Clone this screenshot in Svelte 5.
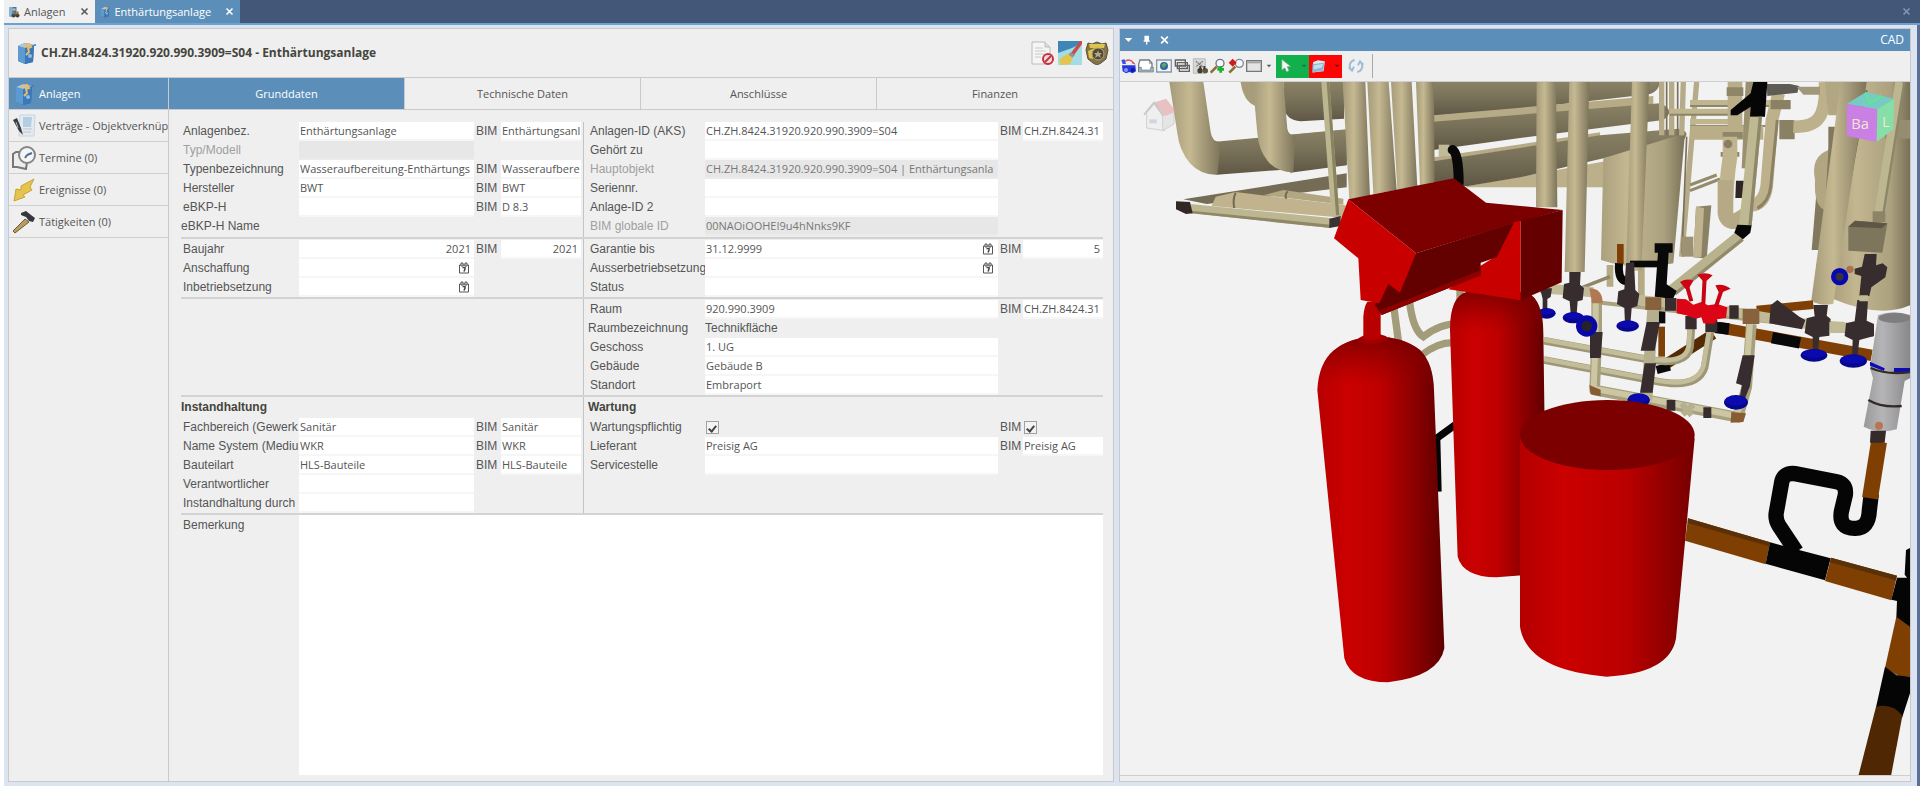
<script>
	const navItems = [
		{ icon: 'device', text: 'Anlagen', active: true },
		{ icon: 'contract', text: 'Verträge - Objektverknüp' },
		{ icon: 'clock', text: 'Termine', count: 0 },
		{ icon: 'bolt', text: 'Ereignisse', count: 0 },
		{ icon: 'hammer', text: 'Tätigkeiten', count: 0 }
	];

	const tabs = ['Grunddaten', 'Technische Daten', 'Anschlüsse', 'Finanzen'];
	let activeTab = $state('Grunddaten');

	const sections = [
		{
			left: [
				{ label: 'Anlagenbez.', value: 'Enthärtungsanlage', bim: 'Enthärtungsanl' },
				{ label: 'Typ/Modell', value: '', disabled: true },
				{
					label: 'Typenbezeichnung',
					value: 'Wasseraufbereitung-Enthärtungs',
					bim: 'Wasseraufbere'
				},
				{ label: 'Hersteller', value: 'BWT', bim: 'BWT' },
				{ label: 'eBKP-H', value: '', bim: 'D 8.3' },
				{ label: 'eBKP-H Name', plain: '' }
			],
			right: [
				{
					label: 'Anlagen-ID (AKS)',
					value: 'CH.ZH.8424.31920.920.990.3909=S04',
					bim: 'CH.ZH.8424.31'
				},
				{ label: 'Gehört zu', value: '' },
				{
					label: 'Hauptobjekt',
					value: 'CH.ZH.8424.31920.920.990.3909=S04 | Enthärtungsanla',
					disabled: true
				},
				{ label: 'Seriennr.', value: '' },
				{ label: 'Anlage-ID 2', value: '' },
				{ label: 'BIM globale ID', value: '00NAOiOOHEI9u4hNnks9KF', disabled: true }
			]
		},
		{
			left: [
				{ label: 'Baujahr', value: '2021', bim: '2021', number: true, bimNumber: true },
				{ label: 'Anschaffung', value: '', date: true },
				{ label: 'Inbetriebsetzung', value: '', date: true }
			],
			right: [
				{ label: 'Garantie bis', value: '31.12.9999', bim: '5', date: true, bimNumber: true },
				{ label: 'Ausserbetriebsetzung', value: '', date: true },
				{ label: 'Status', value: '' }
			]
		},
		{
			left: [],
			right: [
				{ label: 'Raum', value: '920.990.3909', bim: 'CH.ZH.8424.31' },
				{ label: 'Raumbezeichnung', plain: 'Technikfläche' },
				{ label: 'Geschoss', value: '1. UG' },
				{ label: 'Gebäude', value: 'Gebäude B' },
				{ label: 'Standort', value: 'Embraport' }
			]
		},
		{
			leftTitle: 'Instandhaltung',
			rightTitle: 'Wartung',
			left: [
				{ label: 'Fachbereich (Gewerk', value: 'Sanitär', bim: 'Sanitär' },
				{ label: 'Name System (Mediu', value: 'WKR', bim: 'WKR' },
				{ label: 'Bauteilart', value: 'HLS-Bauteile', bim: 'HLS-Bauteile' },
				{ label: 'Verantwortlicher', value: '' },
				{ label: 'Instandhaltung durch', value: '' }
			],
			right: [
				{ label: 'Wartungspflichtig', checked: true },
				{ label: 'Lieferant', value: 'Preisig AG', bim: 'Preisig AG' },
				{ label: 'Servicestelle', value: '' }
			]
		}
	];

	const tools = ['find', 'print', 'globe', 'layers', 'sheet', 'zoomin', 'zoomoff', 'window'];

	// wheel handles seen from the side: [cx, cy, rx, ry]
	const wheels = [
		[140, 730, 27, 16],
		[220, 743, 32, 17],
		[383, 768, 34, 17],
		[416, 990, 34, 20],
		[708, 997, 36, 22],
		[942, 856, 40, 19],
		[1060, 873, 41, 20]
	];
</script>

{#snippet icon(name)}
	<svg class="icon" viewBox="0 0 24 24" aria-hidden="true">
		{#if name === 'device'}
			<path d="M4 5 11 2l9 2-1 17-8 2-7-3z" fill="#2c66a4" />
			<path d="M4 5 11 7v16l-7-3z" fill="#5c9ad2" />
			<path d="M11 7l9-3-1 17-8 2z" fill="#3979ba" />
			<path d="M4 5 11 2l9 2-9 3z" fill="#a9cbe8" />
			<path d="M9 5l6-2 2 3-3 1 1 4-3 3" fill="none" stroke="#e9bd65" stroke-width="2" />
			<circle cx="16" cy="15" r="2" fill="#93bde0" />
			<circle cx="21" cy="4" r="1" fill="#3979ba" />
		{:else if name === 'search-device'}
			<path d="M3 2h14v19H3z" fill="#3979ba" />
			<path d="M3 2h6v19H3z" fill="#80b2dd" />
			<path d="M9 5h6v4H9z" fill="#e9bd65" />
			<circle cx="11" cy="19" r="4" fill="#4c4029" /><circle cx="19" cy="19" r="4" fill="#4c4029" />
			<path d="M10 11h4v6h-4zM17 11h4v6h-4z" fill="#8a723d" />
		{:else if name === 'contract'}
			<path d="M8 1h15l-1 21H7z" fill="#e3eaf1" stroke="#ccd4db" />
			<path d="M11 3h9l-1 10h-8z" fill="#b3cde1" />
			<path d="M11 15h9M11 18h8" stroke="#bcc3ca" />
			<path d="m1 6 4-2 4 10 2 7-4-4z" fill="#393d42" />
			<path d="m4 8 2 6" stroke="#aeb4ba" />
		{:else if name === 'clock'}
			<path d="M8 6H4L1 8v13h4l9 2 1-7" fill="#ededed" stroke="#777" stroke-width="2" />
			<circle cx="15" cy="9" r="8" fill="#f4f6f7" stroke="#858585" stroke-width="2" />
			<path d="M15 9l5-2M15 9l-2 3" stroke="#4f6f8e" stroke-width="2" />
		{:else if name === 'bolt'}
			<path d="M22 1 9 8v4L4 11 2 23l11-4-2-2 9-5-2-3z" fill="#e6c34c" stroke="#c7a33a" />
		{:else if name === 'hammer'}
			<path d="M13 9 1 21l2 2L17 12z" fill="#b99d63" stroke="#6e5a34" />
			<path d="M9 3l5-2 5 4 4 3-2 4-4-1-3-4-5-2z" fill="#34373b" />
		{:else if name === 'document'}
			<path d="M1 1h13l5 5v17H1z" fill="#f5f5f5" stroke="#bbb" />
			<path d="M14 1v5h5" fill="#ddd" stroke="#bbb" />
			<path d="M4 7h8M4 10h11M4 13h9M4 16h6" stroke="#c9c9c9" />
			<circle cx="17" cy="18" r="5" fill="#f4dddd" stroke="#c6323d" stroke-width="2" />
			<path d="m14 21 6-6" stroke="#c6323d" stroke-width="2" />
		{:else if name === 'brush'}
			<path d="M0 0h24v24H0z" fill="#3f86b8" />
			<path d="M0 12 14 7l10-5v22H0z" fill="#a3dce2" />
			<path d="M22 0h2v3l-8 11-3-2z" fill="#c84b4b" />
			<path d="m13 11 4 3-3 3-4-3z" fill="#8d9296" />
			<path d="m10 13 5 4-3 6-9 1-2-5 5-4z" fill="#e4c44e" />
		{:else if name === 'badge'}
			<path d="m3 2 4 1 5-2 5 2 4-1 2 7-2 9-5 4-4 2-4-2-5-4-2-9z" fill="#81734a" stroke="#5d5131" />
			<path d="M4 3h16l-1 4H5zM3 10l7-3 3 2-6 4 1 5-4-1z" fill="#dfc351" />
			<circle cx="13" cy="13" r="6" fill="#514934" stroke="#b5a779" />
			<path d="m13 9 1 3h3l-2 2 1 3-3-2-3 2 1-3-2-2h3z" fill="#b4a98b" />
		{:else if name === 'find'}
			<path d="M2 3l5-1 2 7H4z" fill="#3b50e6" />
			<path d="M8 5q7-5 13 3l-3-1" fill="none" stroke="#d85656" stroke-width="2" />
			<path d="M3 11h20l1 9-5 3-5-2-5 2-5-3z" fill="#2637dc" />
			<circle cx="9" cy="18" r="3" fill="#8794ff" /><circle cx="19" cy="18" r="3" fill="#1017a1" />
		{:else if name === 'print'}
			<path d="M3 3h14l4 5v12H1V9z" fill="#fff" stroke="#767c82" stroke-width="2" />
			<path d="M1 14h4v4h14v-4h4v7H1z" fill="#9fb4c6" stroke="#6c7278" />
			<path d="M17 3v5h4" fill="none" stroke="#767c82" />
		{:else if name === 'globe'}
			<path d="M1 3h22v18H1z" fill="#f1f4f7" stroke="#8a98a6" stroke-width="2" />
			<circle cx="12" cy="12" r="6" fill="#2b68a6" /><path d="M8 10l5-3 3 3-5 5z" fill="#69a45a" />
		{:else if name === 'layers'}
			<path d="M2 3h15v9H2zM5 7h15v9H5zM8 11h15v9H8z" fill="#eee" stroke="#626262" stroke-width="2" />
			<path d="M11 15h9" stroke="#626262" />
		{:else if name === 'sheet'}
			<path d="M2 1h18v22H2z" fill="#d7d7d7" stroke="#aaa" />
			<path d="m6 5 10 8M16 5 6 13" stroke="#777" stroke-width="2" stroke-dasharray="2 1" />
			<circle cx="12" cy="19" r="4" fill="#433d2e" /><circle cx="20" cy="19" r="4" fill="#5f563c" />
			<path d="M11 12h3v5h-3zM17 12h3v5h-3z" fill="#433d2e" />
		{:else if name === 'zoomin'}
			<circle cx="15" cy="8" r="6" fill="#f2f8fb" stroke="#777" stroke-width="2" />
			<path d="m10 13-9 9" stroke="#8b6f38" stroke-width="4" />
			<path d="M16 12v10M11 17h10" stroke="#19b335" stroke-width="4" />
		{:else if name === 'zoomoff'}
			<circle cx="17" cy="8" r="6" fill="#f2f8fb" stroke="#888" stroke-width="2" />
			<path d="m11 13-9 9" stroke="#8b6f38" stroke-width="4" />
			<path d="m7 1 6 6-6 6-6-6z" fill="#d41b1b" />
		{:else if name === 'window'}
			<path d="M1 4h22v16H1z" fill="#e4e4e4" stroke="#777" stroke-width="2" />
			<path d="M2 5h20v3H2z" fill="#a4a4a4" />
		{:else if name === 'cursor'}
			<path d="M5 1v18l5-4 3 7 4-2-3-7h6z" fill="#f4f4f4" stroke="#8ba899" />
		{:else if name === 'folder'}
			<path d="M2 5 10 2l12 2-2 17-19 2z" fill="#dceaf0" />
			<path d="M1 9 22 6l-3 14-18 3z" fill="#8cb9d2" />
			<path d="M3 11 19 8l-2 6-14 4z" fill="#c5dfec" />
		{:else if name === 'refresh'}
			<path d="M10 3a9 9 0 0 0-5 15M1 14l5 5 3-6M14 21a9 9 0 0 0 5-15M23 10l-5-5-3 6" fill="none" stroke="#9dbdd6" stroke-width="3" />
		{:else if name === 'pin'}
			<path d="M7 2h11v11h2v3H5v-3h2zM11 16h3v7h-3z" fill="#fff" />
		{:else if name === 'caret'}
			<path d="M3 7h18l-9 10z" fill="currentColor" />
		{:else if name === 'close'}
			<path d="m4 4 16 16M20 4 4 20" stroke="currentColor" stroke-width="4" />
		{:else if name === 'calendar'}
			<path d="M3 6h18v16H3z" fill="none" stroke="#555" stroke-width="2" />
			<path d="M6 2h4v6H6zM14 2h4v6h-4z" fill="#f8f8f8" stroke="#555" stroke-width="2" />
			<path d="M9 11h5v3l-2 5" fill="none" stroke="#444" stroke-width="3" />
		{/if}
	</svg>
{/snippet}

{#snippet row(item, id)}
	<div class="row" class:plain={item.plain !== undefined} class:off={item.disabled}>
		<label for={id}>{item.label}</label>
		{#if item.plain !== undefined}
			<output {id}>{item.plain}</output>
		{:else if item.checked !== undefined}
			<input class="check" type="checkbox" {id} checked={item.checked} />
			<label for="{id}-bim">BIM</label>
			<input class="check" type="checkbox" id="{id}-bim" checked={item.checked} />
		{:else}
			<div class="field">
				<input type="text" {id} class:number={item.number} value={item.value} disabled={item.disabled} />
				{#if item.date}
					<button class="pick" aria-label="Datum wählen">{@render icon('calendar')}</button>
				{/if}
			</div>
			{#if item.bim}
				<label for="{id}-bim">BIM</label>
				<div class="field">
					<input type="text" id="{id}-bim" class:number={item.bimNumber} value={item.bim} />
				</div>
			{/if}
		{/if}
	</div>
{/snippet}

<div class="app">
	<div class="windows">
		<div class="window-tab light">
			{@render icon('search-device')}
			<span>Anlagen</span>
			<button aria-label="Anlagen schliessen">{@render icon('close')}</button>
		</div>
		<div class="window-tab">
			{@render icon('device')}
			<span>Enthärtungsanlage</span>
			<button aria-label="Enthärtungsanlage schliessen">{@render icon('close')}</button>
		</div>
		<button class="close-all" aria-label="Schliessen">{@render icon('close')}</button>
	</div>

	<main>
		<section class="panel record">
			<header>
				{@render icon('device')}
				<h1>CH.ZH.8424.31920.920.990.3909=S04 - Enthärtungsanlage</h1>
				<button aria-label="Dokument">{@render icon('document')}</button>
				<button aria-label="Darstellung">{@render icon('brush')}</button>
				<button aria-label="Berechtigung">{@render icon('badge')}</button>
			</header>

			<div class="body">
				<nav>
					{#each navItems as item}
						<button class:active={item.active}>
							{@render icon(item.icon)}
							<span>{item.text}{item.count !== undefined ? ` (${item.count})` : ''}</span>
						</button>
					{/each}
				</nav>

				<div class="content">
					<div class="tabs" role="tablist">
						{#each tabs as tab}
							<button
								role="tab"
								aria-selected={tab === activeTab}
								class:active={tab === activeTab}
								onclick={() => (activeTab = tab)}>{tab}</button
							>
						{/each}
					</div>

					<form onsubmit={(e) => e.preventDefault()}>
						{#each sections as section, s}
							<div class="section">
								<div class="half left">
									{#if section.leftTitle}<h2>{section.leftTitle}</h2>{/if}
									{#each section.left as item, i}
										{@render row(item, `l${s}-${i}`)}
									{/each}
								</div>
								<div class="half right">
									{#if section.rightTitle}<h2>{section.rightTitle}</h2>{/if}
									{#each section.right as item, i}
										{@render row(item, `r${s}-${i}`)}
									{/each}
								</div>
							</div>
						{/each}
						<div class="remark">
							<label for="remark">Bemerkung</label>
							<textarea id="remark"></textarea>
						</div>
					</form>
				</div>
			</div>
		</section>

		<section class="panel cad">
			<div class="cad-title">
				<button aria-label="Menü">{@render icon('caret')}</button>
				<button aria-label="Anheften">{@render icon('pin')}</button>
				<button aria-label="CAD schliessen">{@render icon('close')}</button>
				<span>CAD</span>
			</div>
			<div class="toolbar">
				{#each tools as tool}
					<button aria-label={tool}>{@render icon(tool)}</button>
				{/each}
				<button class="drop" aria-label="Fenster wählen">{@render icon('caret')}</button>
				<button class="split green" aria-label="Auswahl">
					{@render icon('cursor')}<i>{@render icon('caret')}</i>
				</button>
				<button class="split red" aria-label="Ordner">
					{@render icon('folder')}<i>{@render icon('caret')}</i>
				</button>
				<button class="refresh" aria-label="Aktualisieren">{@render icon('refresh')}</button>
				<span class="divider"></span>
			</div>

			<svg class="scene" viewBox="0 36 2370 2082" preserveAspectRatio="xMinYMin slice" role="img" aria-label="3D-Modell">
				<defs>
					<linearGradient id="tan">
						<stop offset="0" stop-color="#a59b79" />
						<stop offset=".4" stop-color="#c5b992" />
						<stop offset="1" stop-color="#7d745a" />
					</linearGradient>
					<linearGradient id="tanTank">
						<stop offset="0" stop-color="#aaa07c" />
						<stop offset=".3" stop-color="#c3b791" />
						<stop offset=".75" stop-color="#aba17e" />
						<stop offset="1" stop-color="#787057" />
					</linearGradient>
					<linearGradient id="duct" x2="0" y2="1">
						<stop offset="0" stop-color="#8b8265" />
						<stop offset=".5" stop-color="#777058" />
						<stop offset="1" stop-color="#5f5744" />
					</linearGradient>
					<linearGradient id="red">
						<stop offset="0" stop-color="#b80000" />
						<stop offset=".25" stop-color="#cb0000" />
						<stop offset=".5" stop-color="#bd0000" />
						<stop offset=".8" stop-color="#850000" />
						<stop offset="1" stop-color="#5e0000" />
					</linearGradient>
					<linearGradient id="barrel">
						<stop offset="0" stop-color="#b40000" />
						<stop offset=".25" stop-color="#cb0000" />
						<stop offset=".6" stop-color="#bb0000" />
						<stop offset="1" stop-color="#740000" />
					</linearGradient>
					<linearGradient id="dome" x2="0" y2="1">
						<stop offset="0" stop-color="#700000" stop-opacity=".8" />
						<stop offset=".14" stop-color="#900000" stop-opacity="0" />
					</linearGradient>
					<linearGradient id="grey">
						<stop offset="0" stop-color="#999" />
						<stop offset=".4" stop-color="#b5b5b7" />
						<stop offset="1" stop-color="#88888a" />
					</linearGradient>
				</defs>
				<path d="M0 36h2370v2082H0z" fill="#f2f2f2" />

				<!-- ducts -->
				<path d="M940 36h680q-5 40-60 40L1200 117 940 137z" fill="url(#duct)" />
				<path d="m940 136 660-58v28L940 158z" fill="#b6ab86" />
				<path d="m940 155 680-55q50 20 10 50L1200 204 940 240z" fill="url(#duct)" />
				<path d="m940 262 500-75v12L940 275z" fill="#b6ab86" />
				<path d="m1040 348 160-28 330-60v92h-490z" fill="#bbb08a" />
				<path d="m940 274 500-78 235-20q40 8 15 34l-490 112-160 27-100-10z" fill="url(#duct)" />
				<path d="M490 36h182v110l-130 8q-45-4-49-40z" fill="url(#duct)" />
				<path d="M362 36h40l4 72q-36-14-44-72z" fill="#a79d7a" />
				<path d="m270 217 410-38v106l-390 29z" fill="url(#duct)" />
				<path d="m500 195 180-17v108l-170 22z" fill="url(#duct)" />
				<path d="M148 36h102l22 150q4 30 30 31l-10 97q-50 2-82-34-32-38-38-90z" fill="url(#tan)" />
				<path d="M398 36h92l12 140q4 20 24 22l-6 109q-50 0-77-34-27-32-31-83z" fill="url(#tan)" />

				<!-- rack -->
				<path d="m190 388 490-78v42L260 402z" fill="#746c55" />
				<path d="m275 408 12-28 60-14 330 40v38z" fill="#c0b38e" />
				<path d="m430 376 60-16 180 26v18z" fill="#b3a782" />
				<path d="M347 368q-10 20-4 46M503 364q-10 10-4 22" fill="none" stroke="#716951" stroke-width="6" />
				<path d="m212 402 420 42v30L212 429z" fill="#bdb791" />
				<path d="m212 422 420 42v10L212 430z" fill="#8e8869" />
				<path d="m168 394 42 2 8 34-20 2-30-14z" fill="#332725" />
				<path d="m628 446 34-8v30l-34 6z" fill="#373433" />
				<path d="m604 36h24l30 400h-24z" fill="#bcb690" />
				<path d="m620 36 8 0 30 400h-10z" fill="#89835f" />
				<path d="m668 36h68l14 344-62 8z" fill="url(#tan)" />
				<path d="m742 36h64l24 324-70 12z" fill="url(#tan)" />
				<path d="m813 36h62l17 314-60 8z" fill="url(#tan)" />
				<path d="m888 36h54l2 300-44 12z" fill="url(#tan)" />
				<path d="M956 224h32v34h-32z" fill="#c0ba96" />
				<path d="M998 240q18 10 18 100" fill="none" stroke="#080808" stroke-width="30" stroke-linecap="round" />

				<g transform="translate(1140 0)">
					<!-- rear plant -->
					<path d="M310 265 555 190l-35 390q-110 26-217-10z" fill="url(#tanTank)" />
					<path d="M330 585v65M424 590v90" stroke="#b4aa85" stroke-width="20" />
					<path d="m240 655 90-35" stroke="#8f8768" stroke-width="10" />
					<path d="M485 36v160M515 36v160M550 36l-5 160M590 36 545 560" fill="none" stroke="#b5ab88" stroke-width="16" />
					<path d="M500 36v160M533 36v160M560 200l-14 350" fill="none" stroke="#787058" stroke-width="5" />
					<path d="M510 124h200M570 98h250M570 155h150" stroke="#bfb58f" stroke-width="16" />
					<path d="M510 134h200M570 108h250M570 168h250" stroke="#8d8567" stroke-width="6" />
					<path d="M570 188h220" stroke="#b9ae88" stroke-width="42" />
					<path d="m570 345 80-30M570 362l90-35" stroke="#948b6c" stroke-width="9" />
					<path d="m588 410 46-4-14 160-40-4z" fill="#8b8266" />
					<path d="m588 410 24 4-8 148-24 0z" fill="#bfb48f" />
					<path d="M545 500h35v60h-35z" fill="#9d9373" />
					<path d="M705 36v160" stroke="#b9ae88" stroke-width="44" />
					<path d="M680 52h50v26h-50zM668 186h60v20h-60zM662 246h56v14h-56z" fill="#8f8668" />
					<path d="M690 200v60q-14 90-12 180" fill="none" stroke="#c0b48f" stroke-width="44" />
					<circle cx="684" cy="222" r="13" fill="#887f63" />
					<path d="M676 330v100q4 26 30 24l40-24" fill="none" stroke="#b5aa85" stroke-width="46" />
					<path d="M708 332h36l-6 52h-32z" fill="#2f2523" />
					<path d="m760 36-12 260" stroke="#9a9070" stroke-width="46" />
					<path d="M836 70 816 150 800 350q-8 52-46 56" fill="none" stroke="#bcb18b" stroke-width="38" />
					<path d="m832 150-20 200q-5 45-40 65" fill="none" stroke="#8b8265" stroke-width="9" />
					<path d="M800 42h70l28 6-6 20-90 10z" fill="#5e5b54" />
					<path d="M812 90h60v28h-60zM838 150h46v58h-46z" fill="#8a8164" />
					<path d="M975 36q4 80-20 110-20 26-75 24" fill="none" stroke="#bcb18b" stroke-width="38" />
					<path d="M890 50h70v24h-50z" fill="#a1977a" />
					<path d="M760 36h42l-7 104h-45l2-30-40 26h-20v-16l60-50z" fill="#060606" />
					<path d="M750 140h36l-31 326h-38z" fill="#bfb993" />
					<path d="m776 140 10 0-31 326h-10z" fill="#8e8869" />
					<path d="M720 498 515 662" stroke="#b9b38d" stroke-width="34" />
					<path d="M728 508 525 672" stroke="#918b6c" stroke-width="10" />
					<path d="m712 464 43 2-4 22-22 20-26-20z" fill="#080808" />

					<!-- right tank -->
					<path d="M955 300q30-20 30-70l0-60h60v370h-110z" fill="#81785e" />
					<path d="M985 240q-54 20-40 90-4 80 30 90z" fill="#b1a681" />
					<path d="M975 36h110l-20 100H985z" fill="#b2a783" />
					<path d="M1075 36h155v670q-90 40-232-20z" fill="url(#tanTank)" />
					<path d="M1155 150h75v56h-75z" fill="#968c6f" />
					<path d="M1100 60 1020 500" stroke="#756d55" stroke-width="6" />
					<path d="M1022 36h78l-100 665q-40 10-66-10z" fill="url(#tan)" />
					<path d="m1200 36-63 395" stroke="#bdb790" stroke-width="28" />
					<path d="m1213 36-63 395" stroke="#8c866a" stroke-width="7" />
					<path d="M1118 424h38v32h-38z" fill="#8d8468" />
					<path d="m1045 470 20-18 97 8-15 88-102-6z" fill="#7d755c" />
					<path d="m1045 470 100 5 17-15-97-8z" fill="#5e5745" />

					<path d="M110 36h58l4 376h-64z" fill="url(#tan)" />
					<path d="M208 36h60l-14 570h-60z" fill="url(#tan)" />
					<path d="M396 36h52l-24 566h-46z" fill="url(#tan)" />

					<!-- waste pipes -->
					<path d="M361 522v60" stroke="#7f3f04" stroke-width="20" />
					<path d="M357 580q-4 50 22 54" fill="none" stroke="#080808" stroke-width="24" />
					<path d="M390 582h90" stroke="#090909" stroke-width="20" />
					<path d="M464 520h54v28h-12l-6 95 30 20-10 22h-56l10-137h-10z" fill="#090909" />
					<path d="m770 720 170-16" stroke="#804005" stroke-width="26" />
					<path d="m640 792-150 95" stroke="#552b04" stroke-width="32" />
					<path d="M486 700v60" stroke="#0b0a0a" stroke-width="20" />
					<path d="M485 770v90" stroke="#7d4008" stroke-width="20" />
					<path d="m655 772 460 84" stroke="#804005" stroke-width="34" />
					<path d="m645 772 42 5M816 803l84 16" stroke="#080808" stroke-width="34" />
					<path d="m470 900 40-10" stroke="#0b0a0a" stroke-width="24" />

					<!-- copper and plastic lines -->
					<path d="m290 697 610 68 220 30" fill="none" stroke="#a9a37f" stroke-width="12" />
					<path d="m120 655 160 12M400 688l140 16M680 722l220 38 220 20" fill="none" stroke="#c0ba97" stroke-width="30" />
					<path d="M132 812 440 868q120 22 130-36l5-70M132 870l330 62q130 28 152-40l18-110" fill="none" stroke="#9d9777" stroke-width="23" />
					<path d="M132 809 440 865q116 22 126-36l5-70M132 867l330 62q126 28 148-40l18-110" fill="none" stroke="#c3bd99" stroke-width="14" />
					<path d="M290 690v110l-6 160 210 40 220 42 26-90 14-190" fill="none" stroke="#a6a07e" stroke-width="32" stroke-linejoin="round" />
					<path d="M287 690v110l-6 156 213 40 216 42 26-90 14-190" fill="none" stroke="#ccc6a3" stroke-width="18" stroke-linejoin="round" />
					<path d="m460 700-20 290" stroke="#b5af8d" stroke-width="34" />
					<path d="M268 655q40 0 40 45h-32z" fill="#b17854" />
					<path d="M436 682h48v38h-48zM728 716h50v46h-50z" fill="#88623c" />
					<path d="m268 945 34 14v20l-30-6zM694 1026l44 4-8 26-38 2z" fill="#875c33" />

					<!-- fittings -->
					<g fill="#382d2e">
						<path d="M208 606h34l-2 38 12 10-4 36-15 4-4 50h-16l-4-50-21-10 4-42 16-4zM120 655h36l-4 26-10 6v40h-14v-40z" />
						<path d="M378 580l24-4 4 84 12 12-6 36-17 6-4 50h-16l-2-50-22-12 4-38 18-6zM270 786h38l-6 78h-32zM440 756h40l-16 86h-42zM434 880h34l-10 88h-38zM728 856h36l-14 92-16 40h-16l8-42-18-6zM556 738h34v40h-34zM616 750h36v36h-36zM495 684h34v38h-34zM688 706h28v40h-28z" />
						<path d="m812 706 20-16 66 50 18 10-10 28-98-18zM940 705h44l-4 32 12 10-4 50-30 4-4 50h-16v-50l-24-12 6-44 24-6zM1072 690h32l-4 62 22 10v36l-44 12-6 50h-16l2-50-24-12 4-38 26-6zM1094 552h36l-2 34 20-6 14 12-6 30-42 30-6 26h-30l6-60-20-6v-16l22-6zM500 990h26v32h-26zM610 1012h24v32h-24z" />
					</g>
					<path d="M1078 676h26v18h-26zM988 755h44v34h-44z" fill="#c0ba97" />
					<path d="m545 1000 30 36M580 1004l-32 30" stroke="#b6b08e" stroke-width="18" />

					{#each wheels as [cx, cy, rx, ry]}
						<ellipse {cx} {cy} {rx} {ry} fill="#07078d" />
						<ellipse {cx} cy={cy - 5} rx={rx - 4} ry={ry - 7} fill="#0a0ab0" />
					{/each}
					<circle cx="260" cy="768" r="24" fill="#26222c" stroke="#0808a8" stroke-width="16" />
					<circle cx="1019" cy="620" r="19" fill="#35313b" stroke="#0808b2" stroke-width="14" />
					<circle cx="1050" cy="598" r="11" fill="#a87350" />

					<!-- highlighted valve group -->
					<path d="m530 686 28 2 22 16 24-8 20 10 28-4 30 10-4 32-26 4-10 14-32-2-6-18-16 4-30-10-28-6z" fill="#dc0516" />
					<path d="m560 644 14 50M614 622l-4 80M666 656l-18 54" stroke="#c60413" stroke-width="12" />
					<path d="M540 636q20-12 40-4l-14 24h-10zM592 614q24-10 46 2l-18 16h-12zM646 646q24-6 46 10l-24 10h-12z" fill="#cc0414" />

					<!-- filter housing -->
					<path d="M1134 735q46-16 96 0v190l-16 8-24 145q-50 16-99-8l28-145-9-30z" fill="url(#grey)" />
					<ellipse cx="1184" cy="744" rx="48" ry="15" fill="#7e7e80" />
					<path d="m1110 875 44 20-2 8-42-16zM1182 894h48v14h-48z" fill="#0b0bb8" />
					<path d="M1112 894q50 22 118 12M1105 990q40 24 100 18" fill="none" stroke="#332a28" stroke-width="7" />
					<circle cx="1137" cy="1067" r="12" fill="#b97552" />
				</g>

				<!-- drain -->
				<path d="m1704 1345 246 72-13 66-242-71z" fill="#7f3f02" />
				<path d="m1704 1345 246 72-3 12-244-70z" fill="#593008" />
				<path d="m1950 1417 182 48-17 66-178-50z" fill="#050505" />
				<path d="m2133 1463 198 54-17 74-199-58z" fill="#7f3f02" />
				<path d="m2133 1463 198 54-4 14-197-54z" fill="#593008" />
				<path d="M2331 1523h39v150l-41-30 2-50-17-4zM2358 1440l12-6v100l-16-20z" fill="#050505" />
				<path d="m2329 1640 41 30v150h-30l-45-26z" fill="#7f3f02" />
				<path d="m2295 1790 35 26 40 4v50l-24 74-78-32z" fill="#050505" />
				<path d="M2268 1910q50-12 79 28l-34 180h-98z" fill="#502703" />
				<path d="m2029 1445-52-78q-12-20-8-40l16-90q6-30 40-26l125 24q30 6 26 40l-12 50q-8 50 40 50 42 2 44-54l6-50" fill="none" stroke="#050505" stroke-width="46" />
				<path d="m2277 1115-27 170" stroke="#7f3f02" stroke-width="48" />
				<path d="M2252 1082h46l-4 36h-44z" fill="#332a29" />

				<!-- pipes between the tanks -->
				<path d="m820 700 16 120M868 690q10 90 42 110 50-40 110-40M905 855q50-40 100-37M1020 660v50" fill="none" stroke="#a29c7b" stroke-width="22" />
				<path d="m1005 1065-55 40 4 160" fill="none" stroke="#050505" stroke-width="22" />

				<!-- softener -->
				<path d="M990 780q0-100 50-114h180q50 24 50 124l10 720-151 12q-100-2-116-62z" fill="url(#red)" />
				<path d="M990 780q0-100 50-114h180q50 24 50 124l10 720-151 12q-100-2-116-62z" fill="url(#dome)" />
				<path d="M592 960q4-80 48-118 50-42 130-42t130 40q40 40 42 120l31 775q-16 84-169 102-110 0-131-72z" fill="url(#red)" />
				<path d="M592 960q4-80 48-118 50-42 130-42t130 40q40 40 42 120l31 775q-16 84-169 102-110 0-131-72z" fill="url(#dome)" />
				<path d="M715 805q40-26 84-6l4 12q-44 20-88 4z" fill="#a10000" />
				<path d="M742 695h52q-12 20-12 45v66q-26 8-52 0v-66q2-30 12-45z" fill="#b80000" />
				<path d="m685 388 317-63 96 73 230 22-126 34-314 96z" fill="#7d0000" />
				<path d="m1202 452 126-32-3 217-123 54z" fill="#640000" />
				<path d="m1180 457 22-5v239l-217-33 80-60 60-38z" fill="#c90000" />
				<path d="m888 550 294-92-52 104-48 16v38l-297 119-20-30 40-70z" fill="#630000" />
				<path d="M1082 600v16l-297 119-4-14z" fill="#8c0000" />
				<path d="m685 388 203 162-48 118-35-26-27 58-56-10-7-125-73-60z" fill="#c90000" />

				<path d="M1200 1095v575q20 130 260 150 190-10 208-115l56-600z" fill="url(#barrel)" />
				<ellipse cx="1462" cy="1095" rx="262" ry="105" fill="#7c0000" />

				<!-- home and view cube -->
				<g opacity=".6">
					<path d="m80 128 26-30 28 38v46l-54-8z" fill="#eee" stroke="#bbb" stroke-width="3" />
					<path d="m128 136 34-16v42l-34 20z" fill="#ddd" stroke="#bbb" stroke-width="3" />
					<path d="m100 98 38-12 30 38-32 14z" fill="#e3a1a3" />
					<path d="m72 134 30-36 28 40" fill="none" stroke="#aaa" stroke-width="5" />
					<path d="M88 148h22v12H88z" fill="#bcc1da" />
				</g>
				<path d="m2180 102 58-36 84 20-50 32z" fill="#74ccc4" />
				<path d="m2180 102 92 16-2 98-90-18z" fill="#ca7fe4" />
				<path d="m2272 118 50-32-2 92-50 38z" fill="#86dea9" />
				<path d="m2236 70 14 30 34-22" fill="none" stroke="#65e58d" stroke-width="7" />
				<text x="2194" y="176" class="cube">Ba</text>
				<text x="2286" y="172" class="cube">L</text>
			</svg>
		</section>
	</main>
</div>

<style>
	:global(body) {
		margin: 0;
	}
	.app {
		display: flex;
		flex-direction: column;
		height: 100vh;
		box-sizing: border-box;
		border-left: 4px solid #fff;
		background: #dbe4f0;
		color: #555;
		font-family: 'Open Sans', 'Noto Sans', sans-serif;
		font-size: 11px;
		line-height: 16px;
	}
	button {
		display: flex;
		align-items: center;
		padding: 0;
		border: 0;
		background: none;
		color: inherit;
		font: inherit;
	}
	.icon {
		display: block;
		flex: none;
		width: 16px;
		height: 16px;
	}

	/* window tabs */
	.windows {
		display: flex;
		flex: none;
		height: 23px;
		border-bottom: 2px solid #6ca2cf;
		background: #435779;
	}
	.window-tab {
		display: flex;
		align-items: center;
		gap: 4px;
		padding: 0 6px 0 4px;
		background: #5b8fba;
		color: #fff;
	}
	.window-tab.light {
		background: #f0f0f0;
		color: #555;
	}
	.window-tab span {
		margin-right: 10px;
	}
	.window-tab .icon {
		width: 12px;
		height: 14px;
	}
	.window-tab button .icon,
	.close-all .icon {
		width: 9px;
		height: 9px;
	}
	.close-all {
		margin-left: auto;
		padding-right: 9px;
		color: #8797b3;
	}

	main {
		display: grid;
		flex: 1;
		grid-template-columns: 1106fr 792fr;
		gap: 5px;
		min-height: 0;
		padding: 3px 6px 4px 4px;
		border-right: 3px solid #5a6e96;
	}
	.panel {
		display: flex;
		flex-direction: column;
		min-width: 0;
		min-height: 0;
		box-sizing: border-box;
		border: 1px solid #c9c9c9;
		background: #efefef;
	}

	/* record */
	header {
		display: flex;
		flex: none;
		align-items: center;
		gap: 3px;
		height: 49px;
		padding: 0 4px 0 5px;
		box-sizing: border-box;
		border-bottom: 1px solid #c9c9c9;
	}
	header .icon {
		width: 24px;
		height: 24px;
	}
	h1 {
		flex: 1;
		margin: 0;
		color: #45453d;
		font-size: 12px;
	}
	.body {
		display: flex;
		flex: 1;
		min-height: 0;
	}
	nav {
		flex: none;
		width: 159px;
		border-right: 1px solid #c9c9c9;
	}
	nav button {
		gap: 3px;
		width: 100%;
		height: 32px;
		padding-left: 3px;
		overflow: hidden;
		border-bottom: 1px solid #cfcfcf;
		white-space: nowrap;
	}
	nav .icon {
		width: 24px;
		height: 24px;
	}
	nav .active,
	.tabs .active {
		background: #5b8fba;
		color: #fff;
	}
	.content {
		display: flex;
		flex: 1;
		flex-direction: column;
		min-width: 0;
	}
	.tabs {
		display: grid;
		grid-template-columns: repeat(4, 1fr);
		height: 32px;
	}
	.tabs button {
		justify-content: center;
		border-right: 1px solid #c9c9c9;
		border-bottom: 1px solid #c9c9c9;
	}
	.tabs button:last-child {
		border-right: 0;
	}

	/* form */
	form {
		display: flex;
		flex: 1;
		flex-direction: column;
		min-height: 0;
		padding: 12px 10px 6px 12px;
	}
	.section {
		display: grid;
		grid-template-columns: 403fr 519fr;
		border-bottom: 2px solid #d3d3d3;
	}
	.half {
		min-width: 0;
		padding-top: 1px;
	}
	.section:first-child .half {
		padding: 0 0 1px;
	}
	.left {
		border-right: 1px solid #c4c4c4;
	}
	.row {
		display: grid;
		align-items: center;
		height: 19px;
	}
	.left .row {
		grid-template-columns: 118px 1fr 27px 80px;
		padding-right: 2px;
	}
	.right .row {
		grid-template-columns: 121px 1fr 25px 80px;
	}
	label,
	output,
	h2 {
		font-family: 'Liberation Sans', Arial, sans-serif;
		font-size: 12px;
		line-height: 17px;
		white-space: nowrap;
	}
	label {
		min-width: 0;
		padding-left: 2px;
	}
	.right .row > label:first-child {
		padding-left: 6px;
	}
	.plain > label:first-child {
		padding-left: 0;
	}
	.right .plain > label:first-child,
	.right h2 {
		padding-left: 4px;
	}
	.off label {
		color: #a0a0a0;
	}
	h2 {
		height: 20px;
		margin: 0;
		color: #45453d;
		line-height: 18px;
	}
	.field {
		display: flex;
		align-items: center;
		height: 17px;
		min-width: 0;
		border-bottom: 2px solid #f6f6f6;
		background: #fff;
	}
	.off .field {
		border-color: #ebebeb;
		background: #e7e7e7;
	}
	.field input {
		flex: 1;
		min-width: 0;
		width: 0;
		height: 17px;
		box-sizing: border-box;
		padding: 0 0 0 1px;
		border: 0;
		background: none;
		color: #555;
		font: inherit;
	}
	.field input:disabled {
		color: #777;
	}
	.field .number {
		padding-right: 3px;
		text-align: right;
	}
	.pick {
		padding: 0 4px;
	}
	.pick .icon {
		width: 12px;
		height: 12px;
	}
	.check {
		display: grid;
		place-items: center;
		width: 13px;
		height: 13px;
		margin: 0 1px;
		box-sizing: border-box;
		appearance: none;
		border: 1px solid #a0a0a0;
		background: #f3f3f3;
	}
	.check:checked::after {
		width: 3px;
		height: 6px;
		border: solid #444;
		border-width: 0 2px 2px 0;
		content: '';
		rotate: 40deg;
	}
	.remark {
		display: flex;
		flex: 1;
		min-height: 0;
	}
	.remark label {
		width: 116px;
		line-height: 20px;
	}
	textarea {
		flex: 1;
		padding: 2px;
		border: 0;
		resize: none;
		background: #fff;
		font: inherit;
	}

	/* CAD */
	.cad {
		padding-bottom: 5px;
	}
	.cad-title {
		display: flex;
		flex: none;
		align-items: center;
		gap: 7px;
		height: 22px;
		padding: 0 6px 0 3px;
		background: #5b8fba;
		color: #fff;
	}
	.cad-title .icon {
		width: 11px;
		height: 10px;
	}
	.cad-title span {
		margin-left: auto;
		font-size: 12px;
	}
	.toolbar {
		display: flex;
		flex: none;
		align-items: center;
		gap: 2px;
		height: 30px;
		border-bottom: 1px solid #cfcfcf;
	}
	.toolbar .drop {
		padding: 0 2px;
	}
	.drop .icon,
	.split i .icon {
		width: 6px;
		height: 6px;
	}
	.split {
		gap: 8px;
		justify-content: center;
		width: 33px;
		height: 23px;
	}
	.green {
		background: #12b04c;
		color: #23703e;
	}
	.red {
		margin-left: -2px;
		background: #fb0505;
		color: #930505;
	}
	.split .icon {
		width: 14px;
	}
	.refresh {
		margin: 0 6px 0 4px;
	}
	.divider {
		height: 24px;
		border-left: 1px solid #aaa;
	}
	.scene {
		display: block;
		flex: 1;
		width: 100%;
		min-height: 0;
		border-bottom: 1px solid #cfcfcf;
		box-sizing: border-box;
	}
	.cube {
		fill: #f2e6cf;
		font-family: 'Open Sans', sans-serif;
		font-size: 44px;
	}
</style>
